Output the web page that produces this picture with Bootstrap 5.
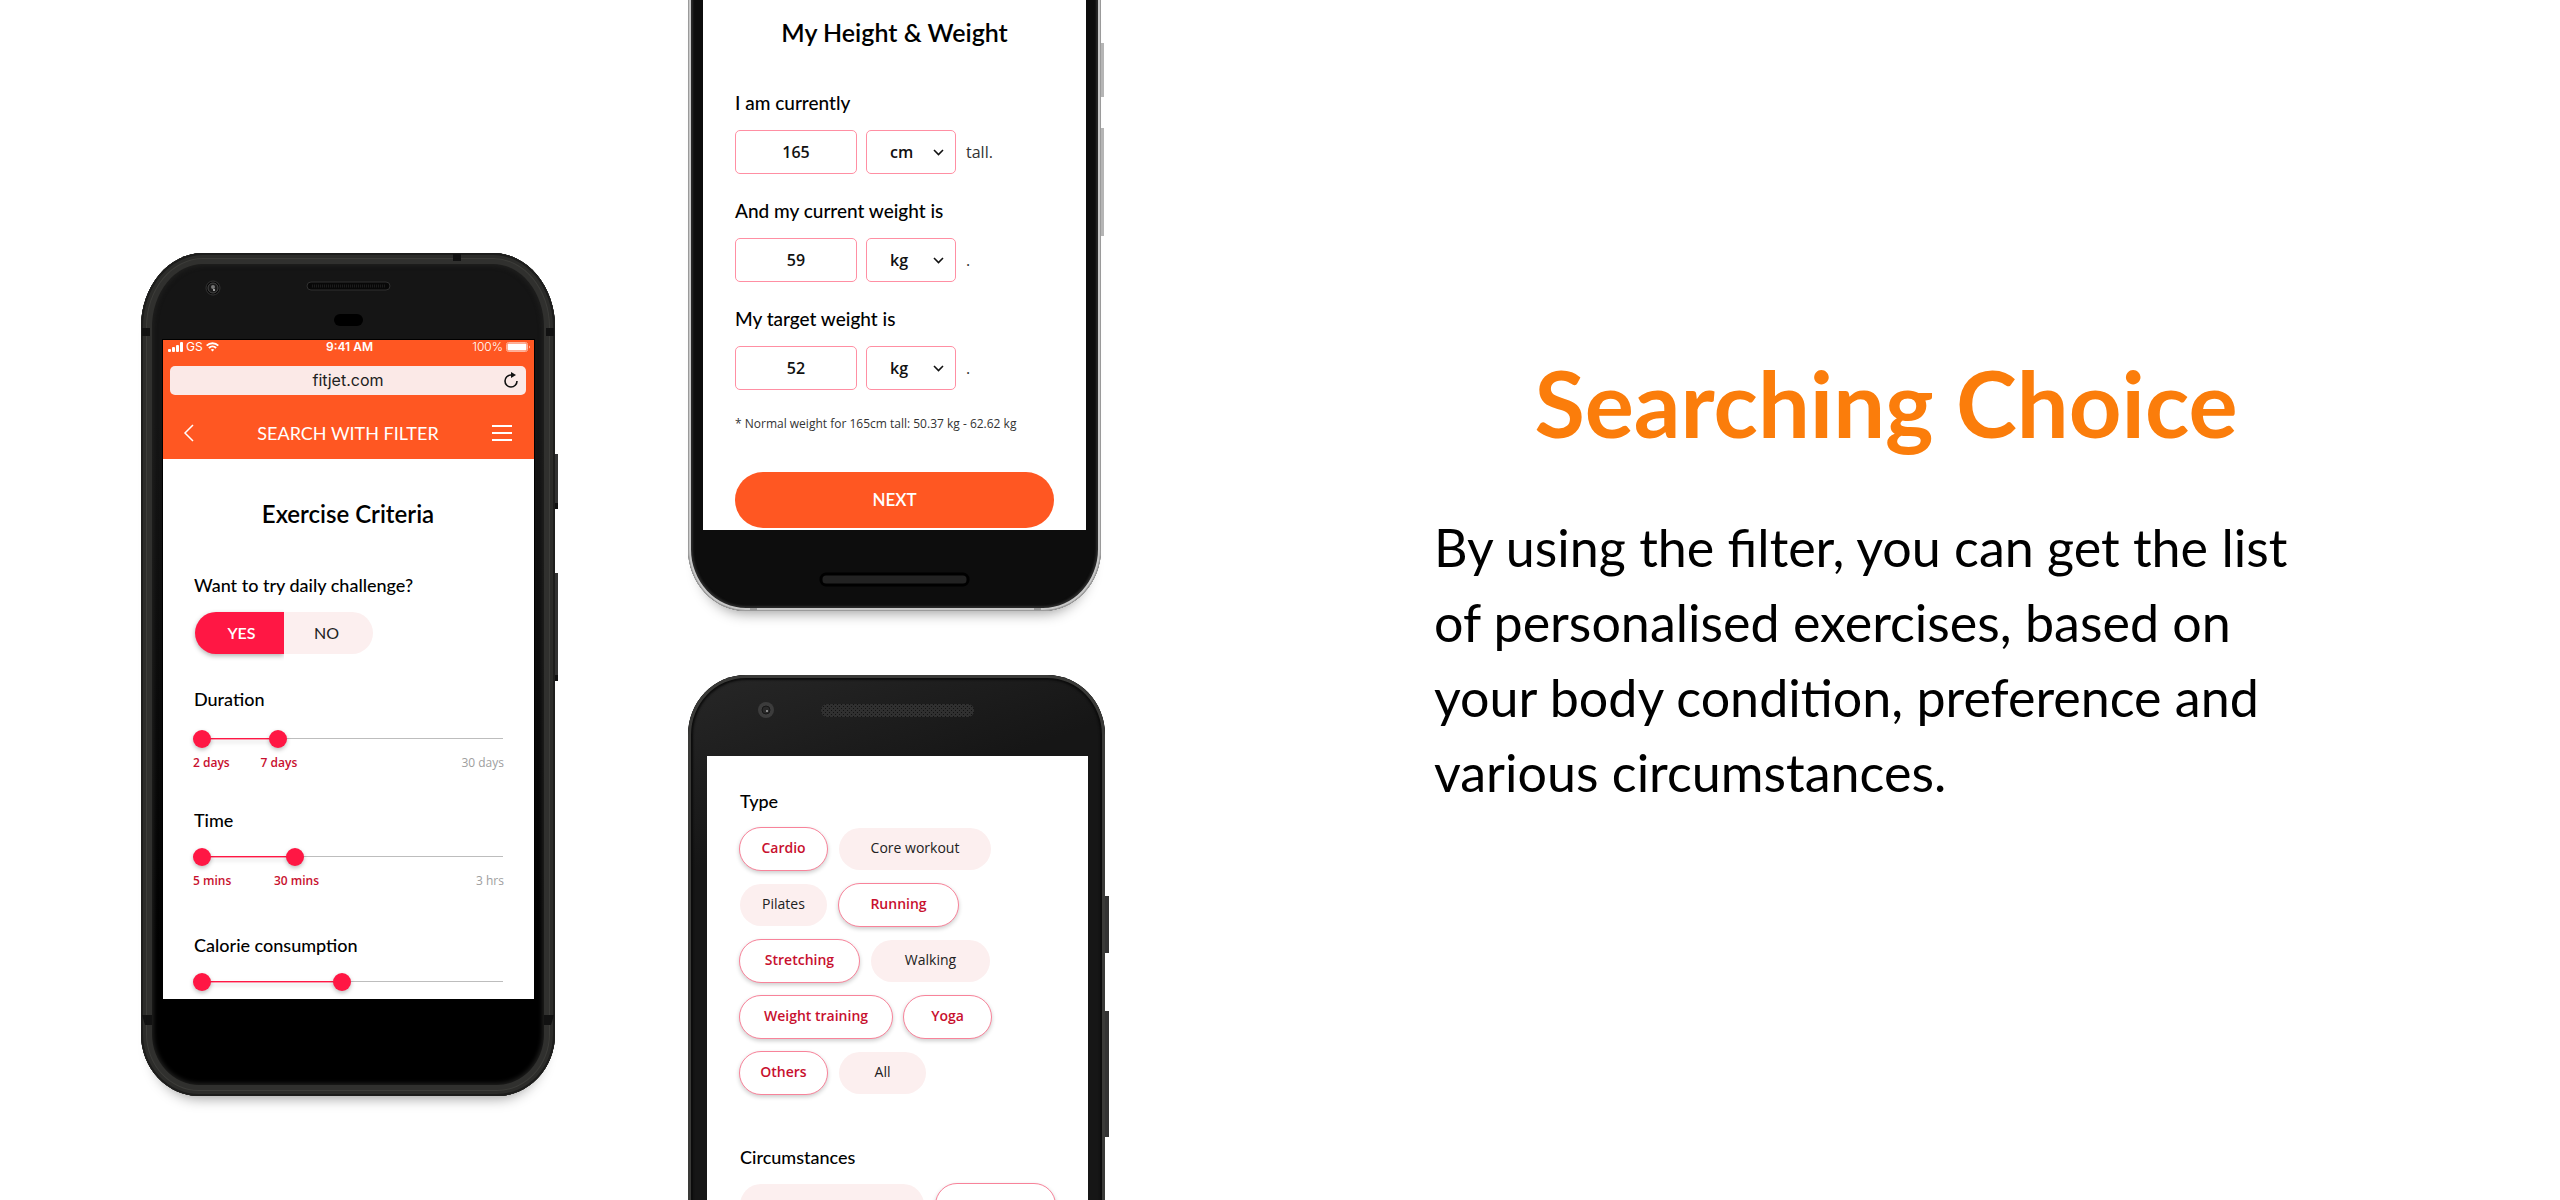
<!DOCTYPE html>
<html lang="en">
<head>
<meta charset="utf-8">
<meta name="viewport" content="width=device-width, initial-scale=1">
<title>Fitjet – Searching Choice</title>
<link href="https://cdn.jsdelivr.net/npm/bootstrap@5.3.0/dist/css/bootstrap.min.css" rel="stylesheet">
<style>
  :root { --fj-orange: #ff5722; --fj-pink: #ff1744; --fj-red: #c8102e; --fj-blush: #fcefef; --fj-line: #ff8fa3; }
  body { font-family: Lato, sans-serif; color: #000; background: #fff; }
  .showcase { height: 100vh; overflow: hidden; }
  .phones { padding-left: 141px; gap: 133px; }

  /* copy */
  .pitch { padding: 0 120px 42px 154px; }
  .pitch-text { max-width: 904px; }
  .pitch h1 { font-size: 92px; line-height: 110px; font-weight: 700; color: #fb7d0b; margin-bottom: 52px; }
  .pitch p { font-size: 52px; line-height: 75px; }

  /* devices */
  .device { position: relative; flex: none; }
  .device-a { width: 414px; margin-top: 253px; padding: 87px 21px 97px 22px; border-radius: 62px 62px 58px 58px / 74px 74px 62px 62px;
    background: linear-gradient(#151515, #151515 20%, #000 85%);
    box-shadow: inset 0 0 0 2px #1d1d1c, inset 0 0 0 5px #2c2c2a, inset 0 0 0 6px #3c3c39, inset 0 0 0 11px #30302e, inset 0 0 4px 13px #1f1f1e, 0 14px 14px -12px rgba(0,0,0,.4); }
  .device-b { width: 413px; margin-top: -10px; padding: 10px 15px 81px; border-radius: 0 0 58px 58px / 0 0 62px 62px; background: #0d0d0d;
    box-shadow: inset 0 0 0 1px #9a9a9a, inset 0 0 0 3px #c8c8c8, inset 0 0 2px 5px #2b2b2b, 0 14px 14px -12px rgba(0,0,0,.4); }
  .device-c { width: 417px; margin-top: 64px; padding: 81px 17px 60px 19px; border-radius: 58px 58px 0 0 / 60px 60px 0 0;
    background: linear-gradient(160deg, #272727, #161616 22%, #161616); box-shadow: inset 0 0 0 3px #3a3a38, inset 0 0 2px 5px #0c0c0c; }
  .trim-art { position: absolute; left: 0; width: 100%; overflow: visible; }
  .trim-top { top: 0; }
  .trim-bottom { bottom: 0; }
  .screen { position: relative; background: #fff; overflow: hidden; }

  /* search screen */
  .topbar { background: var(--fj-orange); color: #fff; height: 119px; }
  .status { height: 14px; font: 12px/14px Inter, sans-serif; padding: 0 3px 0 5px; }
  .status span { flex: 1 1 0; gap: 3px; }
  .address { margin: 12px 8px 0 7px; height: 29px; border-radius: 5px; background: #fbe9e7; position: relative; }
  .address input { border: 0; background: none; width: 100%; height: 29px; text-align: center; font: 16px/29px Inter, sans-serif; color: #212121; padding: 0; }
  .address button { position: absolute; right: 8px; top: 5px; border: 0; background: none; padding: 0; line-height: 0; }
  .navline { height: 52px; margin-top: 12px; padding: 0 22px 0 20px; font-size: 18px; line-height: 52px; }
  .navline span { flex: 1; text-align: center; padding-left: 10px; }
  .navline button { border: 0; background: none; padding: 0; line-height: 0; }
  .body-a { height: 540px; padding: 41px 31px 0 30px; }
  .title { font-size: 24px; line-height: 28px; font-weight: 600; text-align: center; margin: 0 0 46px; }
  .label-x { font-size: 18px; line-height: 22px; font-weight: 500; margin: 0; padding-left: 1px; display: block; }
  .toggle { width: 178px; margin: 16px 0 0 2px; }
  .toggle .btn { border: 0; padding: 0; font-size: 16px; line-height: 42px; background: var(--fj-blush); color: #212121; width: 89px; }
  .toggle label:first-of-type { border-radius: 21px 0 0 21px; padding-left: 4px; }
  .toggle label:last-of-type { border-radius: 0 21px 21px 0; padding-right: 4px; }
  .toggle .btn-check:checked + .btn { background: var(--fj-pink); color: #fff; font-weight: 600; box-shadow: 0 2px 5px rgba(0,0,0,.3); clip-path: inset(-8px 0 -10px -8px); }
  .range-pair { position: relative; height: 18px; background: linear-gradient(#bdbdbd, #bdbdbd) 0 8px / 100% 1px no-repeat; }
  .fill { position: absolute; left: 9px; top: 8px; height: 1px; width: calc((100% - 18px) * var(--v) / 100); background: var(--fj-pink); box-shadow: 0 1px 0 rgba(255,23,68,.4), 0 3px 4px rgba(0,0,0,.25); }
  .range-pair input { position: absolute; left: 0; top: 0; width: 100%; height: 18px; margin: 0; appearance: none; background: none; pointer-events: none; }
  .range-pair input::-webkit-slider-runnable-track { height: 18px; background: none; }
  .range-pair input::-webkit-slider-thumb { appearance: none; width: 18px; height: 18px; border: 0; border-radius: 50%; background: var(--fj-pink); box-shadow: 0 2px 4px rgba(0,0,0,.25); pointer-events: auto; }
  .ticks { position: relative; display: flex; justify-content: space-between; font: 600 12px/16px "Open Sans", sans-serif; color: var(--fj-red); margin: 7px -1px 0 0; }
  .ticks .at { position: absolute; left: calc(10px + (100% - 19px) * var(--v) / 100); transform: translateX(-50%); }
  .ticks .end { font-weight: 400; color: #9e9e9e; }
  .group-1 { margin-top: 34px; } .group-1 .range-pair { margin-top: 20px; }
  .group-2 { margin-top: 38px; } .group-3 { margin-top: 45px; }
  .group-2 .range-pair, .group-3 .range-pair { margin-top: 17px; }

  /* height and weight screen */
  .body-b { padding: 18px 32px 2px; }
  .body-b .title { font-size: 25px; }
  .body-b .label-x { font-size: 19px; padding-left: 0; }
  .field-row { gap: 9px; margin: 16px 0 26px; }
  .field { height: 44px; border: 1px solid var(--fj-line); border-radius: 5px; background: #fff; font: 600 16px/42px "Open Sans", sans-serif; color: #111; padding: 0; }
  .field-num { width: 122px; text-align: center; }
  .unit { position: relative; width: 90px; }
  .unit select { width: 90px; appearance: none; padding-left: 23px; }
  .unit svg { position: absolute; right: 12px; top: 19px; pointer-events: none; }
  .after { font: 16px/44px "Open Sans", sans-serif; color: #333; padding-left: 1px; }
  .hint { font: 12px/16px "Open Sans", sans-serif; color: #333; margin: 0 0 40px; }
  .next { height: 56px; border-radius: 28px; border: 0; padding: 0; font-size: 17px; font-weight: 600; }
  .next, .next:hover { background: var(--fj-orange); color: #fff; }

  /* type screen */
  .body-c { padding: 34px 32px 80px; }
  .chips { gap: 12px 10px; margin: 15px 0 51px; }
  .chips-type { max-width: 256px; }
  .chips .btn { height: 44px; border-radius: 22px; padding: 0; font: 14px/40px "Open Sans", sans-serif; border: 1px solid transparent; background: var(--fj-blush); background-clip: padding-box; color: #212121; }
  .chips .btn-check:checked + .btn { background: #fff; border-color: #f8839a; color: var(--fj-red); font-weight: 600; box-shadow: 0 2px 4px rgba(0,0,0,.2); }
  .w-s { width: 89px; } .w-m { width: 121px; } .w-l { width: 154px; } .w-xl { width: 186px; }
</style>
</head>
<body>
<main class="showcase container-fluid p-0">
  <div class="row g-0 h-100">
    <div class="col-6 h-100">
      <div class="phones d-flex align-items-start">

        <section class="device device-a" aria-label="Search with filter">
          <svg class="trim-art trim-top" height="843" viewBox="0 0 414 843" aria-hidden="true">
            <path d="M312 1h8v7h-8zM1 75h8v8H1zM405 75h8v8h-8zM1 762h10v10H4zM403 762h10l-3 10h-7z" fill="#111"/>
            <circle cx="72" cy="35" r="7" fill="#080808" stroke="#333"/><circle cx="72" cy="35" r="5" fill="#1a1a1a" stroke="#4a4a4a"/><circle cx="72" cy="34" r="2" fill="#777"/><circle cx="73" cy="37" r="1" fill="#ccc"/>
            <rect x="166" y="29" width="83" height="8" rx="4" fill="#080808" stroke="#303030"/><path d="M171 33h73" stroke="#1c1c1c" stroke-width="3" stroke-dasharray="1 1"/>
            <rect x="193" y="61" width="29" height="12" rx="6" fill="#000"/>
            <path d="M21 86h373v661H21z" fill="#000"/>
            <path d="M414 201h3v55h-3zM414 320h3v108h-3z" fill="#333"/><path d="M414 250h3v6h-3zM414 422h3v6h-3z" fill="#111"/>
          </svg>
          <div class="screen">
            <header class="topbar">
              <div class="status d-flex align-items-center">
                <span class="d-flex align-items-center">
                  <svg width="15" height="10" viewBox="0 0 15 10" fill="#fff" aria-hidden="true"><rect y="7" width="3" height="3" rx="1"/><rect x="4" y="5" width="3" height="5" rx="1"/><rect x="8" y="3" width="3" height="7" rx="1"/><rect x="12" width="3" height="10" rx="1"/></svg>
                  GS
                  <svg width="13" height="10" viewBox="0 0 13 10" fill="none" stroke="#fff" stroke-width="2" aria-hidden="true"><path d="M.7 3.6a8.3 8.3 0 0 1 11.6 0M2.9 6a5.2 5.2 0 0 1 7.2 0"/><path d="M4.8 7.7a2.5 2.5 0 0 1 3.4 0L6.5 9.6z" fill="#fff" stroke="none"/></svg>
                </span>
                <b class="fw-semibold">9:41 AM</b>
                <span class="d-flex align-items-center justify-content-end fw-light">100%
                  <svg width="25" height="10" viewBox="0 0 25 10" aria-hidden="true"><rect x=".5" y=".5" width="21" height="9" rx="2" fill="none" stroke="#ffb199"/><rect x="1.500" y="1.500" width="19" height="7" rx="1" fill="#fff"/><path d="M23 3.500q1.500 1.500 0 3z" fill="#fff"/></svg>
                </span>
              </div>
              <div class="address">
                <input type="text" value="fitjet.com" aria-label="Address">
                <button type="button" aria-label="Reload"><svg width="14" height="18" viewBox="0 0 14 18" fill="none" stroke="#111" stroke-width="1.600"><path d="M8.500 4H7a6 6 0 1 0 6 6"/><path d="M7 1l5 3-5 3z" fill="#111" stroke="none"/></svg></button>
              </div>
              <div class="navline d-flex align-items-center">
                <button type="button" aria-label="Back"><svg width="11" height="18" viewBox="0 0 11 18" fill="none" stroke="#fff" stroke-width="1.500"><path d="M10 1L2 9l8 8"/></svg></button>
                <span>SEARCH WITH FILTER</span>
                <button type="button" aria-label="Menu"><svg width="20" height="16" viewBox="0 0 20 16" stroke="#fff" stroke-width="2"><path d="M0 1h20M0 8h20M0 15h20"/></svg></button>
              </div>
            </header>
            <div class="body-a">
              <h2 class="title">Exercise Criteria</h2>
              <p class="label-x">Want to try daily challenge?</p>
              <div class="toggle d-flex" role="group" aria-label="Daily challenge">
                <input type="radio" class="btn-check" name="daily" id="yes" checked><label class="btn" for="yes">YES</label>
                <input type="radio" class="btn-check" name="daily" id="no"><label class="btn" for="no">NO</label>
              </div>
              <div class="group-1" style="--v:26">
                <label class="label-x" for="dur-max">Duration</label>
                <div class="range-pair"><div class="fill"></div><input type="range" value="0" aria-label="Shortest duration"><input type="range" id="dur-max" value="26"></div>
                <div class="ticks"><span>2 days</span><span class="at">7 days</span><span class="end">30 days</span></div>
              </div>
              <div class="group-2" style="--v:32">
                <label class="label-x" for="time-max">Time</label>
                <div class="range-pair"><div class="fill"></div><input type="range" value="0" aria-label="Shortest time"><input type="range" id="time-max" value="32"></div>
                <div class="ticks"><span>5 mins</span><span class="at">30 mins</span><span class="end">3 hrs</span></div>
              </div>
              <div class="group-3" style="--v:48">
                <label class="label-x" for="cal-max">Calorie consumption</label>
                <div class="range-pair"><div class="fill"></div><input type="range" value="0" aria-label="Lowest calories"><input type="range" id="cal-max" value="48"></div>
              </div>
            </div>
          </div>
        </section>

        <div class="d-flex flex-column">
          <section class="device device-b" aria-label="My height and weight">
            <svg class="trim-art trim-bottom" height="612" viewBox="0 0 413 612" aria-hidden="true">
              <path d="M413 44h3v54h-3zM413 129h3v108h-3z" fill="#b5b5b5"/>
              <rect x="133" y="575" width="147" height="11" rx="5" fill="#222" stroke="#000" stroke-width="3"/>
              <path d="M62 609h7v3h-7zM346 609h7v3h-7z" fill="#999"/>
            </svg>
            <div class="screen">
              <form class="body-b">
                <h2 class="title">My Height &amp; Weight</h2>
                <label class="label-x" for="height">I am currently</label>
                <div class="field-row d-flex">
                  <input class="field field-num" id="height" type="text" value="165">
                  <div class="unit"><select class="field" aria-label="Height unit"><option>cm</option><option>in</option></select>
                    <svg width="11" height="7" viewBox="0 0 11 7" fill="none" stroke="#111" stroke-width="1.600"><path d="M1 1l4.500 4.500L10 1"/></svg></div>
                  <span class="after">tall.</span>
                </div>
                <label class="label-x" for="weight">And my current weight is</label>
                <div class="field-row d-flex">
                  <input class="field field-num" id="weight" type="text" value="59">
                  <div class="unit"><select class="field" aria-label="Weight unit"><option>kg</option><option>lb</option></select>
                    <svg width="11" height="7" viewBox="0 0 11 7" fill="none" stroke="#111" stroke-width="1.600"><path d="M1 1l4.500 4.500L10 1"/></svg></div>
                  <span class="after">.</span>
                </div>
                <label class="label-x" for="target">My target weight is</label>
                <div class="field-row d-flex">
                  <input class="field field-num" id="target" type="text" value="52">
                  <div class="unit"><select class="field" aria-label="Target unit"><option>kg</option><option>lb</option></select>
                    <svg width="11" height="7" viewBox="0 0 11 7" fill="none" stroke="#111" stroke-width="1.600"><path d="M1 1l4.500 4.500L10 1"/></svg></div>
                  <span class="after">.</span>
                </div>
                <p class="hint">* Normal weight for 165cm tall: 50.37 kg - 62.62 kg</p>
                <button type="button" class="btn next w-100">NEXT</button>
              </form>
            </div>
          </section>

          <section class="device device-c" aria-label="Exercise type">
            <svg class="trim-art trim-top" height="524" viewBox="0 0 417 524" aria-hidden="true">
              <defs><pattern id="mesh" width="4" height="4" patternUnits="userSpaceOnUse"><rect width="4" height="4" fill="#303030"/><rect x="1" y="1" width="1" height="1" fill="#121212"/><rect x="3" y="3" width="1" height="1" fill="#121212"/></pattern></defs>
              <circle cx="78" cy="35" r="8" fill="#3c3c3c"/><circle cx="78" cy="35" r="4" fill="#2a2a2a" stroke="#161616"/><circle cx="79" cy="36" r="1" fill="#aaa"/>
              <rect x="133" y="29" width="153" height="13" rx="6" fill="url(#mesh)"/>
              <path d="M417 221h4v57h-4zM417 336h4v126h-4z" fill="#333"/>
            </svg>
            <div class="screen">
              <div class="body-c">
                <h3 class="label-x">Type</h3>
                <div class="chips chips-type d-flex flex-wrap">
                  <input type="checkbox" class="btn-check" id="t1" checked><label class="btn w-s" for="t1">Cardio</label>
                  <input type="checkbox" class="btn-check" id="t2"><label class="btn w-l" for="t2">Core workout</label>
                  <input type="checkbox" class="btn-check" id="t3"><label class="btn w-s" for="t3">Pilates</label>
                  <input type="checkbox" class="btn-check" id="t4" checked><label class="btn w-m" for="t4">Running</label>
                  <input type="checkbox" class="btn-check" id="t5" checked><label class="btn w-m" for="t5">Stretching</label>
                  <input type="checkbox" class="btn-check" id="t6"><label class="btn w-m" for="t6">Walking</label>
                  <input type="checkbox" class="btn-check" id="t7" checked><label class="btn w-l" for="t7">Weight training</label>
                  <input type="checkbox" class="btn-check" id="t8" checked><label class="btn w-s" for="t8">Yoga</label>
                  <input type="checkbox" class="btn-check" id="t9" checked><label class="btn w-s" for="t9">Others</label>
                  <input type="checkbox" class="btn-check" id="t10"><label class="btn w-s" for="t10">All</label>
                </div>
                <h3 class="label-x">Circumstances</h3>
                <div class="chips d-flex flex-wrap">
                  <input type="checkbox" class="btn-check" id="c1"><label class="btn w-xl" for="c1"></label>
                  <input type="checkbox" class="btn-check" id="c2" checked><label class="btn w-m" for="c2"></label>
                </div>
              </div>
            </div>
          </section>
        </div>

      </div>
    </div>
    <div class="col-6 pitch d-flex align-items-center">
      <div class="pitch-text">
        <h1 class="text-center">Searching Choice</h1>
        <p class="mb-0">By using the filter, you can get the list of personalised exercises, based on your body condition, preference and various circumstances.</p>
      </div>
    </div>
  </div>
</main>
<script src="https://cdn.jsdelivr.net/npm/bootstrap@5.3.0/dist/js/bootstrap.bundle.min.js"></script>
</body>
</html>
